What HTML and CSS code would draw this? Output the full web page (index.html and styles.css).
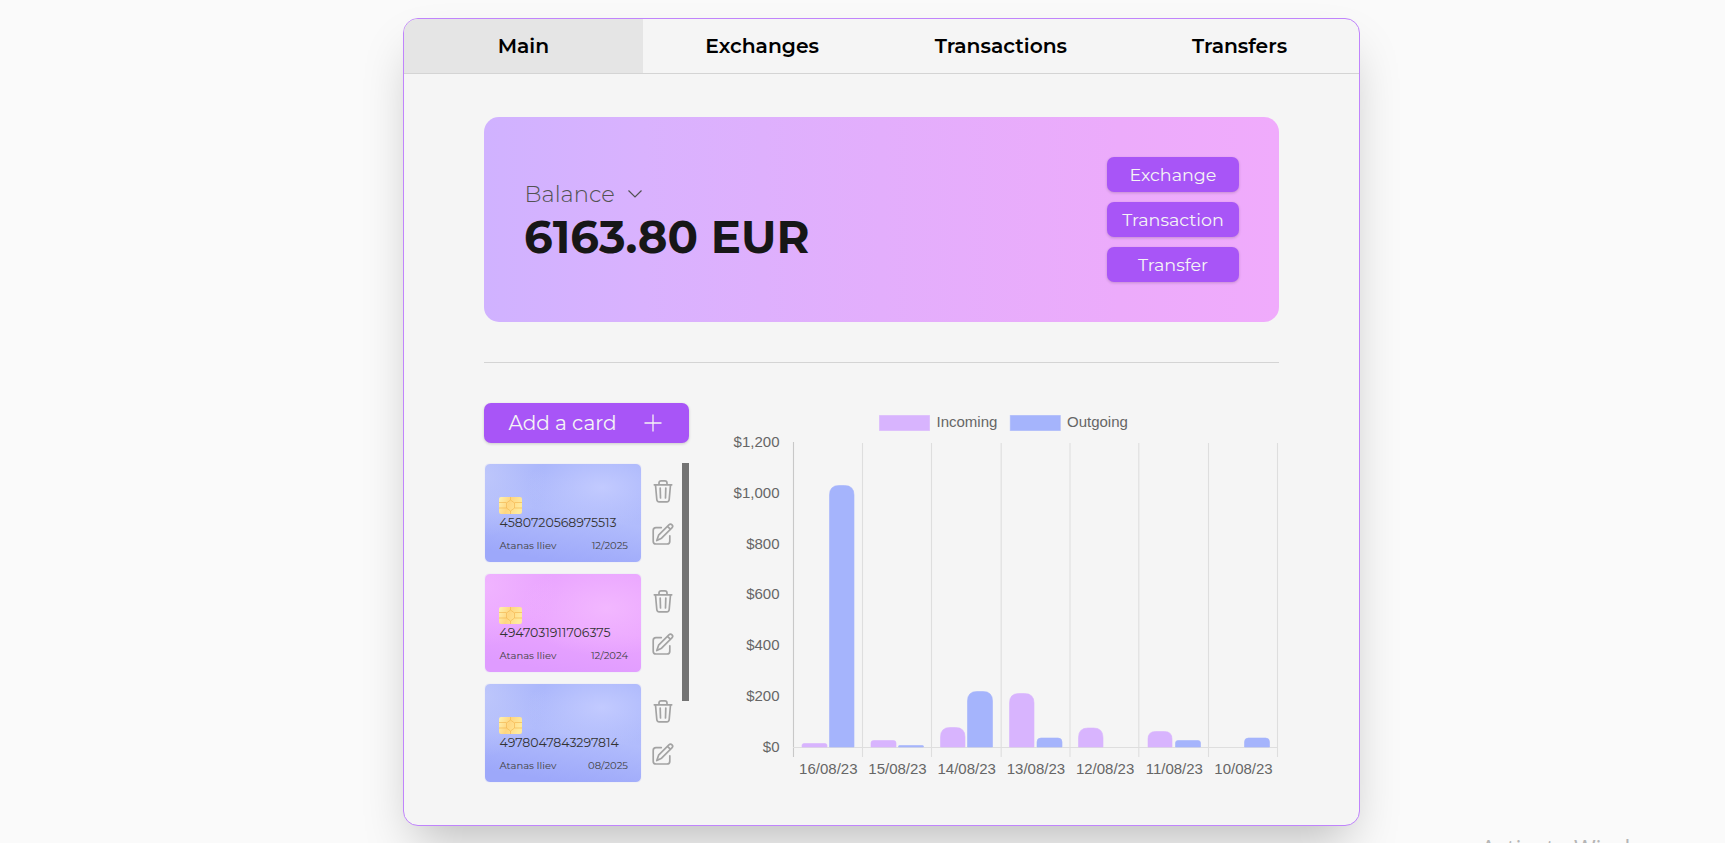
FILE: index.html
```html
<!DOCTYPE html>
<html lang="en">
<head>
<meta charset="utf-8">
<title>Balance</title>
<link rel="stylesheet" href="styles.css">
</head>
<body>
<svg class="defs" width="0" height="0">
  <symbol id="trash" viewBox="0 0 20 24"><path d="M1.3 5.8h17.4M6 5.500V4C6 2.700 6.800 1.900 8.200 1.900h3.600c1.400 0 2.200.8 2.200 2.100v1.500M2.5 6l1.300 14.500c.1 1.500 1 2.300 2.400 2.300h7.600c1.400 0 2.300-.8 2.400-2.300L17.500 6M7.200 9l.3 10M12.800 9l-.3 10"/></symbol>
  <symbol id="edit" viewBox="0 0 22 22"><path d="M9.3 4.6H4C2.2 4.6 1.2 5.6 1.2 7.4v10.8c0 1.8 1 2.8 2.8 2.8h11c1.8 0 2.8-1 2.8-2.8v-5.4M4.800 17.600l1.800-5.400L16.9 1.9c1-1 2.200-1 3.100-.1s.9 2.100-.1 3.100L9.600 15.200zM15.500 3.300l3 3"/></symbol>
  <symbol id="chip" viewBox="0 0 23 17"><rect width="23" height="17" rx="2" fill="url(#gold)"/><path d="M0 5.500h7.500M0 11h7.500M15.500 5.500H23M15.500 11H23M11.500 0v3M11.500 14v3M11.500 3L7.500 6v5l4 3 4-3V6z" fill="none" stroke="#f3b955" stroke-width=".7"/></symbol>
  <linearGradient id="gold" x2="1" y2=".3"><stop offset="0" stop-color="#fff3b0"/><stop offset=".5" stop-color="#ffd680"/><stop offset="1" stop-color="#ffea9c"/></linearGradient>
</svg>
<main class="panel">
  <nav class="tabs">
    <a class="tab active">Main</a>
    <a class="tab">Exchanges</a>
    <a class="tab">Transactions</a>
    <a class="tab">Transfers</a>
  </nav>
  <div class="content">
    <section class="hero">
      <div class="balance">
        <div class="label"><span>Balance</span><svg width="16" height="10" viewBox="0 0 16 10"><path d="M1.500 1.500L8 8l6.500-6.500"/></svg></div>
        <div class="amount">6163.80 EUR</div>
      </div>
      <div class="actions">
        <button class="btn">Exchange</button>
        <button class="btn">Transaction</button>
        <button class="btn">Transfer</button>
      </div>
    </section>
    <hr class="rule">
    <section class="lower">
      <div class="side">
        <button class="btn add"><span>Add a card</span><svg width="18" height="18" viewBox="0 0 18 18"><path d="M9 .500v17M.500 9h17"/></svg></button>
        <div class="scroller">
          <div class="cards">
            <div class="item"><div class="card blue"><svg class="chip" width="23" height="17"><use href="#chip"/></svg><div class="number">4580720568975513</div><div class="meta"><span>Atanas Iliev</span><span>12/2025</span></div></div><div class="tools"><svg width="20" height="24"><use href="#trash"/></svg><svg width="22" height="22"><use href="#edit"/></svg></div></div>
            <div class="item"><div class="card pink"><svg class="chip" width="23" height="17"><use href="#chip"/></svg><div class="number">4947031911706375</div><div class="meta"><span>Atanas Iliev</span><span>12/2024</span></div></div><div class="tools"><svg width="20" height="24"><use href="#trash"/></svg><svg width="22" height="22"><use href="#edit"/></svg></div></div>
            <div class="item"><div class="card blue"><svg class="chip" width="23" height="17"><use href="#chip"/></svg><div class="number">4978047843297814</div><div class="meta"><span>Atanas Iliev</span><span>08/2025</span></div></div><div class="tools"><svg width="20" height="24"><use href="#trash"/></svg><svg width="22" height="22"><use href="#edit"/></svg></div></div>
          </div>
          <div class="thumb"></div>
        </div>
      </div>
      <svg class="chart" width="550" height="382" viewBox="729 403 550 382">
        <g class="grid">
          <path class="axis" d="M793.500 442v315"/>
          <path d="M862.500 443v314M931.500 443v314M1001.200 443v314M1070 443v314M1138.800 443v314M1208.500 443v314M1277.500 443v314M793 747.500h485"/>
        </g>
        <g class="in">
          <rect x="879.500" y="415.500" width="50" height="15"/>
          <path d="M802 747v-1.500q0-2 2-2h21q2 0 2 2v1.500z"/>
          <path d="M871 747v-4q0-2.500 2.500-2.500h20q2.500 0 2.500 2.500v4z"/>
          <path d="M940.500 747v-10q0-9.500 9.500-9.500h5.500q9.500 0 9.500 9.500v10z"/>
          <path d="M1009.500 747v-44q0-9.500 9.500-9.500h5.500q9.500 0 9.500 9.500v44z"/>
          <path d="M1078.500 747v-9.500q0-9.500 9.500-9.500h5.500q9.500 0 9.500 9.500v9.500z"/>
          <path d="M1148 747v-8q0-7.500 7.500-7.500h9q7.500 0 7.500 7.500v8z"/>
        </g>
        <g class="out">
          <rect x="1010.300" y="415.500" width="50" height="15"/>
          <path d="M829.500 747v-252q0-9.500 9.500-9.500h5.500q9.500 0 9.500 9.500v252z"/>
          <path d="M898.500 747v-.5q0-1 1-1h23q1 0 1 1v.5z"/>
          <path d="M967.500 747v-46q0-9.500 9.500-9.500h6q9.500 0 9.500 9.500v46z"/>
          <path d="M1037 747v-5q0-4 4-4h17q4 0 4 4v5z"/>
          <path d="M1175.500 747v-4q0-2.500 2.500-2.500h20q2.500 0 2.500 2.500v4z"/>
          <path d="M1244.500 747v-5q0-4 4-4h17q4 0 4 4v5z"/>
        </g>
        <g class="text">
          <text x="936.500" y="427">Incoming</text><text x="1067" y="427">Outgoing</text>
          <g text-anchor="end"><text x="779.500" y="447">$1,200</text><text x="779.500" y="498">$1,000</text><text x="779.500" y="549">$800</text><text x="779.500" y="599">$600</text><text x="779.500" y="650">$400</text><text x="779.500" y="701">$200</text><text x="779.500" y="752">$0</text></g>
          <g text-anchor="middle"><text x="828.300" y="774">16/08/23</text><text x="897.500" y="774">15/08/23</text><text x="966.700" y="774">14/08/23</text><text x="1035.900" y="774">13/08/23</text><text x="1105.100" y="774">12/08/23</text><text x="1174.300" y="774">11/08/23</text><text x="1243.500" y="774">10/08/23</text></g>
        </g>
      </svg>
    </section>
  </div>
</main>
<div class="watermark">Activate Windows</div>
</body>
</html>
```
FILE: styles.css
```css
* { box-sizing: border-box; }
html, body { height: 100%; overflow: hidden; }
body { margin: 0; padding: 18px 0 0 403px; background: #fafafa; font-family: Montserrat, Inter, sans-serif; color: #000; }
.defs { position: absolute; }
.panel { width: 957px; height: 808px; border: 1px solid #c084fc; border-radius: 15px; background: #f5f5f5; overflow: hidden; box-shadow: 0 25px 50px -12px rgba(0,0,0,.25); }
.tabs { display: grid; grid-template-columns: repeat(4, 1fr); height: 55px; border-bottom: 1px solid #d4d4d4; }
.tab { display: flex; align-items: center; justify-content: center; padding-bottom: 2px; font-size: 20.300px; font-weight: 600; }
.active { background: #e5e5e5; }
.content { padding: 43px 80px 40px; }
.hero { height: 205px; padding: 0 40px; border-radius: 15px; background: linear-gradient(90deg, #d0b2ff, #d9b2fe 20%, #e3aefc 50%, #ecabfb 80%, #f0abfc); display: flex; justify-content: space-between; align-items: center; }
.balance { padding-top: 4px; }
.label { display: flex; align-items: center; gap: 12px; height: 30px; padding-left: .5px; font-size: 22.600px; font-weight: 300; color: #525252; }
.label svg { fill: none; stroke: #525252; stroke-width: 1.200; }
.amount { height: 56px; line-height: 56px; font-size: 45px; font-weight: 700; color: #171717; }
.actions { display: flex; flex-direction: column; gap: 10px; }
.btn { display: flex; align-items: center; justify-content: center; width: 132px; height: 35px; padding: 0; border: 0; border-radius: 7px; background: #a855f7; color: #f5f5f5; font: 400 17.500px Montserrat, Inter, sans-serif; box-shadow: 0 1px 3px rgba(0,0,0,.18); }
.rule { height: 1px; margin: 40px 0; border: 0; background: #d4d4d4; }
.lower { display: flex; justify-content: space-between; }
.side { width: 205px; }
.add { width: 205px; height: 40px; gap: 27px; padding-right: 3px; font-size: 20px; }
.add svg { fill: none; stroke: #f5f5f5; stroke-width: 1.300; }
.scroller { display: flex; justify-content: space-between; margin-top: 20px; }
.cards { display: flex; flex-direction: column; gap: 10px; }
.item { display: flex; height: 100px; gap: 10.500px; }
.card { width: 158px; height: 100px; padding: 33px 13px 0 14px; border: 1px solid #f0f0f6; border-radius: 6px; color: #262626; }
.blue { background: radial-gradient(ellipse 75px 40px at 75% 24%, #c2caff 0, rgba(194,202,255,0) 100%), radial-gradient(ellipse 60px 60px at 0 12%, #bdc6fb, rgba(189,198,251,0)), linear-gradient(190deg, #aab6fb 20%, #b1bcfc 50%, #9da8fa 90%); }
.pink { background: radial-gradient(ellipse 85px 48px at 78% 35%, #f2b7ff 0, rgba(242,183,255,0) 100%), radial-gradient(ellipse 70px 60px at 0 12%, #f0b4ff, rgba(240,180,255,0)), linear-gradient(190deg, #e9a4ff 20%, #eaa5ff 50%, #df9bff 90%); }
.chip { display: block; }
.number { height: 18px; padding-left: .5px; line-height: 18px; font-size: 12.500px; font-weight: 400; color: #333; }
.meta { display: flex; justify-content: space-between; margin-top: 7px; padding-left: .5px; line-height: 14px; font-size: 10px; color: #404040; }
.tools { display: flex; flex-direction: column; align-items: center; width: 20px; padding-top: 16px; gap: 20px; }
.tools svg { flex: none; fill: none; stroke: #a3a3a3; stroke-width: 1.700; stroke-linecap: round; stroke-linejoin: round; }
.thumb { width: 7px; height: 238px; background: #737373; }
.chart { display: block; }
.grid { fill: none; stroke: #dedede; stroke-width: 1.100; }
.axis { stroke: #c8c8c8; }
.in { fill: #d8b4fe; stroke: #d8b4fe; stroke-opacity: .6; }
.out { fill: #a5b4fc; stroke: #a5b4fc; stroke-opacity: .6; }
.text { fill: #666; font: 15px "Liberation Sans", sans-serif; }
.watermark { position: absolute; left: 1481px; top: 832px; font: 23.500px/32px "Open Sans", sans-serif; color: #b5b5b5; white-space: nowrap; }
```
